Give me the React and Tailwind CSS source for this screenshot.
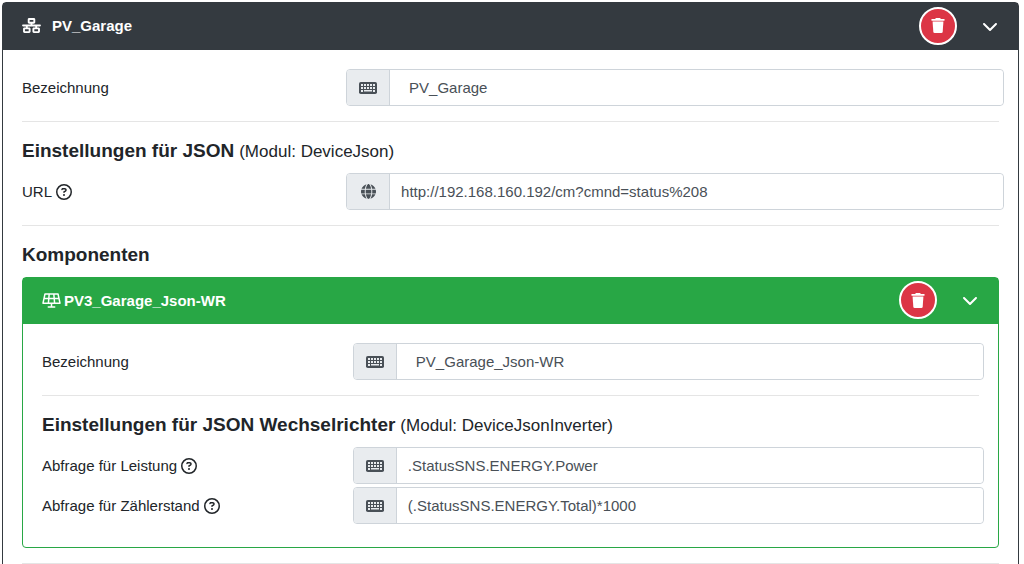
import React from "react";
import {
  FaChevronDown,
  FaGlobe,
  FaNetworkWired,
  FaRegCircleQuestion,
} from "react-icons/fa6";

function KeyboardIcon() {
  return (
    <svg viewBox="0 0 18 12" className="h-3 w-[18px]" aria-hidden="true">
      <rect width="18" height="12" rx="1.8" fill="currentColor" />
      <path
        fill="#e9ecef"
        d="M2 2h2v2H2zM5 2h2v2H5zM8 2h2v2H8zM11 2h2v2h-2zM14 2h2v2h-2zM2 5h2v2H2zM5 5h2v2H5zM8 5h2v2H8zM11 5h2v2h-2zM14 5h2v2h-2zM2 8h2v2H2zM5 8h8v1.5H5zM14 8h2v2h-2z"
      />
    </svg>
  );
}

function SolarIcon() {
  return (
    <svg
      viewBox="0 0 19 15"
      className="h-[15px] w-[19px]"
      fill="none"
      stroke="currentColor"
      strokeWidth="1.5"
      strokeLinejoin="round"
      strokeLinecap="round"
      aria-hidden="true"
    >
      <path d="M3 .9h13l2 9.3H1zM2 5.5h15M7.2 1l-.8 9M11.8 1l.8 9M9.5 10.2v3.6M6.3 14.1h6.4" />
    </svg>
  );
}

function TrashIcon() {
  return (
    <svg viewBox="0 0 14 15" className="h-[15px] w-[14px]" fill="currentColor" aria-hidden="true">
      <path d="M4.6.3Q4.8 0 5.2 0h3.6q.4 0 .6.3l.4.7h3.4q.4 0 .4.5v.8q0 .4-.4.4H.8q-.4 0-.4-.4v-.8Q.4 1 .8 1h3.4z" />
      <path d="M1.6 3.4h10.8l-.7 10.3q-.1 1.3-1.4 1.3H3.7q-1.3 0-1.4-1.3z" />
    </svg>
  );
}

function HeaderButtons() {
  return (
    <div className="flex items-center">
      <button
        type="button"
        aria-label="Löschen"
        className="flex h-[38px] w-[38px] items-center justify-center rounded-full border-2 border-white bg-[#dc3545] text-white"
      >
        <TrashIcon />
      </button>
      <button type="button" aria-label="Einklappen" className="ml-[25px] flex w-4 justify-center text-white">
        <FaChevronDown className="h-4 w-4" />
      </button>
    </div>
  );
}

function Field({ id, label, value, icon: Icon = KeyboardIcon, help, indent }) {
  return (
    <div className="-mr-[5px] grid grid-cols-[33%_1fr] items-center">
      <div className="flex items-center gap-1">
        <label htmlFor={id}>{label}</label>
        {help && (
          <button type="button" aria-label={"Hilfe zu " + label}>
            <FaRegCircleQuestion className="h-4 w-4" />
          </button>
        )}
      </div>
      <div className="flex h-[37px] rounded border border-[#ced4da] text-[#495057]">
        <span className="flex w-[43px] shrink-0 items-center justify-center rounded-l-[3px] border-r border-[#ced4da] bg-[#e9ecef]">
          <Icon />
        </span>
        <input
          id={id}
          type="text"
          defaultValue={value}
          className={
            indent
              ? "min-w-0 flex-1 rounded-r bg-white pl-[19px] pr-3 outline-none"
              : "min-w-0 flex-1 rounded-r bg-white pl-[11px] pr-3 outline-none"
          }
        />
      </div>
    </div>
  );
}

function Heading({ title, module }) {
  return (
    <h3 className="mb-[9px] flex items-baseline gap-[5px] text-[19px] leading-[27px] font-bold">
      {title}
      {module && <span className="text-[17px] leading-5 font-normal">(Modul: {module})</span>}
    </h3>
  );
}

function Divider() {
  return <hr className="my-[15px] border-t border-[#e5e5e5]" />;
}

export default function App() {
  return (
    <div className="h-screen overflow-hidden bg-white pt-[2px] pr-[5px] pl-[2px] font-['Liberation_Sans',Arial,sans-serif] text-[15px] leading-[23px] text-[#212529]">
      <section className="rounded border border-[#343a40] bg-white">
        <header className="flex h-[47px] items-center justify-between bg-[#343a40] pr-5 pb-[2px] pl-[19px] font-bold text-white">
          <div className="flex items-center gap-[11px]">
            <FaNetworkWired className="h-[15px] w-[19px]" />
            <span>PV_Garage</span>
          </div>
          <HeaderButtons />
        </header>
        <div className="p-[19px]">
          <Field id="device-name" label="Bezeichnung" value="PV_Garage" indent />
          <Divider />
          <Heading title="Einstellungen für JSON" module="DeviceJson" />
          <Field id="device-url" label="URL" value="http://192.168.160.192/cm?cmnd=status%208" icon={FaGlobe} help />
          <Divider />
          <Heading title="Komponenten" />
          <section className="rounded border border-[#28a745] bg-white">
            <header className="flex h-[46px] items-center justify-between bg-[#28a745] pr-5 pb-[2px] pl-[19px] font-bold text-white">
              <div className="flex items-center gap-[3px]">
                <SolarIcon />
                <span>PV3_Garage_Json-WR</span>
              </div>
              <HeaderButtons />
            </header>
            <div className="px-[19px] pt-[19px] pb-[23px]">
              <Field id="component-name" label="Bezeichnung" value="PV_Garage_Json-WR" indent />
              <Divider />
              <Heading title="Einstellungen für JSON Wechselrichter" module="DeviceJsonInverter" />
              <div className="flex flex-col gap-[3px]">
                <Field id="power" label="Abfrage für Leistung" value=".StatusSNS.ENERGY.Power" help />
                <Field id="counter" label="Abfrage für Zählerstand" value="(.StatusSNS.ENERGY.Total)*1000" help />
              </div>
            </div>
          </section>
          <Divider />
        </div>
      </section>
    </div>
  );
}
